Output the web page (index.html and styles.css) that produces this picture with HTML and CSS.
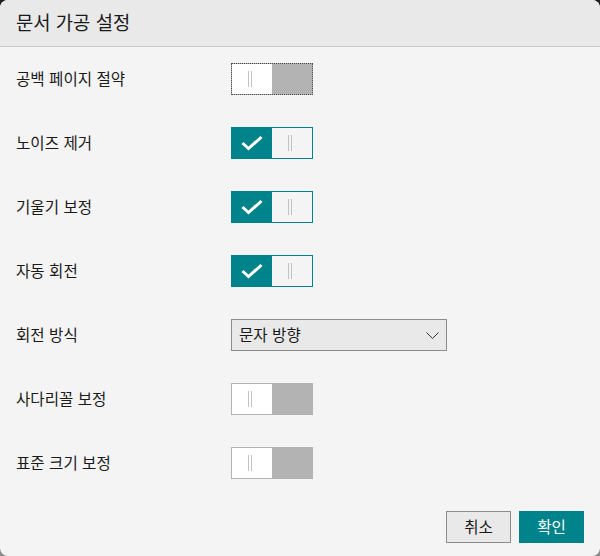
FILE: index.html
```html
<!DOCTYPE html>
<html lang="ko">
<head>
<meta charset="utf-8">
<title>문서 가공 설정</title>
<link rel="stylesheet" href="styles.css">
</head>
<body>
<div class="dialog">
  <div class="header"><span class="title">문서 가공 설정</span></div>
  <div class="content">
    <div class="row">
      <span class="label">공백 페이지 절약</span>
      <div class="toggle off focus">
        <span class="half left"><span class="grip"></span></span>
        <span class="half right"></span>
      </div>
    </div>
    <div class="row">
      <span class="label">노이즈 제거</span>
      <div class="toggle on">
        <span class="half left"><svg class="check" width="22" height="16" viewBox="0 0 22 16"><polyline points="1.5,8 7.5,13.5 20.5,2" fill="none" stroke="#fff" stroke-width="3"/></svg></span>
        <span class="half right"><span class="grip"></span></span>
      </div>
    </div>
    <div class="row">
      <span class="label">기울기 보정</span>
      <div class="toggle on">
        <span class="half left"><svg class="check" width="22" height="16" viewBox="0 0 22 16"><polyline points="1.5,8 7.5,13.5 20.5,2" fill="none" stroke="#fff" stroke-width="3"/></svg></span>
        <span class="half right"><span class="grip"></span></span>
      </div>
    </div>
    <div class="row">
      <span class="label">자동 회전</span>
      <div class="toggle on">
        <span class="half left"><svg class="check" width="22" height="16" viewBox="0 0 22 16"><polyline points="1.5,8 7.5,13.5 20.5,2" fill="none" stroke="#fff" stroke-width="3"/></svg></span>
        <span class="half right"><span class="grip"></span></span>
      </div>
    </div>
    <div class="row">
      <span class="label">회전 방식</span>
      <div class="select">
        <span class="select-text">문자 방향</span>
        <svg class="chevron" width="13" height="7" viewBox="0 0 13 7"><polyline points="0.5,0.5 6.5,6.5 12.5,0.5" fill="none" stroke="#333" stroke-width="1"/></svg>
      </div>
    </div>
    <div class="row">
      <span class="label">사다리꼴 보정</span>
      <div class="toggle off">
        <span class="half left"><span class="grip"></span></span>
        <span class="half right"></span>
      </div>
    </div>
    <div class="row">
      <span class="label">표준 크기 보정</span>
      <div class="toggle off">
        <span class="half left"><span class="grip"></span></span>
        <span class="half right"></span>
      </div>
    </div>
  </div>
  <div class="footer">
    <button class="btn cancel">취소</button>
    <button class="btn ok">확인</button>
  </div>
</div>
</body>
</html>
```
FILE: styles.css
```css
* { box-sizing: border-box; }
html, body { margin: 0; padding: 0; }
body {
  width: 600px;
  height: 556px;
  background: linear-gradient(#1e1e1e, #8a8a8a);
  font-family: "Noto Sans CJK KR", "Noto Sans", sans-serif;
  color: #1a1a1a;
}
.dialog {
  width: 600px;
  height: 556px;
  border-radius: 8px;
  overflow: hidden;
  background: #f4f4f4;
  display: flex;
  flex-direction: column;
}
.header {
  height: 47px;
  background: #e9e9e9;
  border-bottom: 1px solid #c9c9c9;
  display: flex;
  align-items: center;
  padding-left: 16px;
  padding-bottom: 3px;
}
.title { font-size: 18.8px; }
.content {
  padding: 16px 0 0 16px;
  display: flex;
  flex-direction: column;
  gap: 32px;
}
.row {
  height: 32px;
  display: flex;
  align-items: center;
}
.label {
  width: 215px;
  font-size: 15.6px;
  padding-bottom: 3px;
}
.toggle {
  width: 82px;
  height: 32px;
  border: 1px solid #b3b3b3;
  display: flex;
  background: #b3b3b3;
}
.toggle.focus { border: 1px dotted #4a4a4a; }
.half {
  width: 40px;
  height: 30px;
  display: flex;
  align-items: center;
  justify-content: flex-start;
}
.toggle.off .left { background: #fff; }
.toggle.off .right { background: #b3b3b3; }
.toggle.on { border-color: #00838a; background: #00838a; }
.toggle.on .left { background: #00838a; padding-left: 9px; }
.toggle.on .right { background: #f4f4f4; }
.grip {
  width: 4px;
  height: 16px;
  margin-left: 16px;
  margin-top: -1px;
  border-left: 1px solid #c2c2c2;
  border-right: 1px solid #c2c2c2;
}
.check { display: block; }
.select {
  width: 216px;
  height: 32px;
  border: 1px solid #8c8c8c;
  background: #e9e9e9;
  display: flex;
  align-items: center;
  justify-content: space-between;
  padding: 0 7px 0 7px;
}
.select-text { font-size: 15.6px; padding-bottom: 3px; }
.chevron { display: block; }
.footer {
  margin-top: auto;
  display: flex;
  justify-content: flex-end;
  gap: 8px;
  padding: 0 16px 13px 0;
}
.btn {
  width: 65px;
  height: 32px;
  font-family: inherit;
  font-size: 15.6px;
  padding: 0 0 3px 0;
  border: 1px solid #8c8c8c;
  background: #e9e9e9;
  color: #1a1a1a;
}
.btn.ok {
  background: #00838a;
  border-color: #00838a;
  color: #fff;
}
```
